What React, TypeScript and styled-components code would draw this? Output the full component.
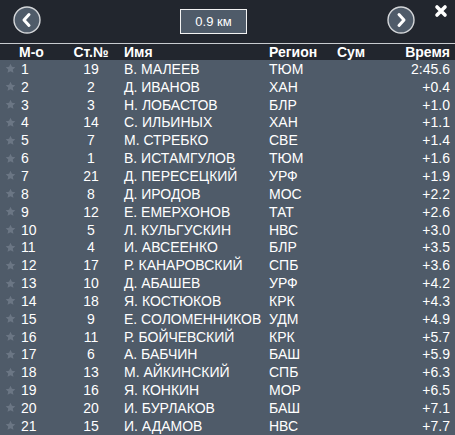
import React from 'react';
import styled, { createGlobalStyle } from 'styled-components';

const GlobalStyle = createGlobalStyle`
  html, body {
    margin: 0;
    padding: 0;
    background: #22262e;
  }
`;

interface Result {
  place: number;
  bib: number;
  name: string;
  region: string;
  time: string;
}

const results: Result[] = [
  { place: 1, bib: 19, name: 'В. МАЛЕЕВ', region: 'ТЮМ', time: '2:45.6' },
  { place: 2, bib: 2, name: 'Д. ИВАНОВ', region: 'ХАН', time: '+0.4' },
  { place: 3, bib: 3, name: 'Н. ЛОБАСТОВ', region: 'БЛР', time: '+1.0' },
  { place: 4, bib: 14, name: 'С. ИЛЬИНЫХ', region: 'ХАН', time: '+1.1' },
  { place: 5, bib: 7, name: 'М. СТРЕБКО', region: 'СВЕ', time: '+1.4' },
  { place: 6, bib: 1, name: 'В. ИСТАМГУЛОВ', region: 'ТЮМ', time: '+1.6' },
  { place: 7, bib: 21, name: 'Д. ПЕРЕСЕЦКИЙ', region: 'УРФ', time: '+1.9' },
  { place: 8, bib: 8, name: 'Д. ИРОДОВ', region: 'МОС', time: '+2.2' },
  { place: 9, bib: 12, name: 'Е. ЕМЕРХОНОВ', region: 'ТАТ', time: '+2.6' },
  { place: 10, bib: 5, name: 'Л. КУЛЬГУСКИН', region: 'НВС', time: '+3.0' },
  { place: 11, bib: 4, name: 'И. АВСЕЕНКО', region: 'БЛР', time: '+3.5' },
  { place: 12, bib: 17, name: 'Р. КАНАРОВСКИЙ', region: 'СПБ', time: '+3.6' },
  { place: 13, bib: 10, name: 'Д. АБАШЕВ', region: 'УРФ', time: '+4.2' },
  { place: 14, bib: 18, name: 'Я. КОСТЮКОВ', region: 'КРК', time: '+4.3' },
  { place: 15, bib: 9, name: 'Е. СОЛОМЕННИКОВ', region: 'УДМ', time: '+4.9' },
  { place: 16, bib: 11, name: 'Р. БОЙЧЕВСКИЙ', region: 'КРК', time: '+5.7' },
  { place: 17, bib: 6, name: 'А. БАБЧИН', region: 'БАШ', time: '+5.9' },
  { place: 18, bib: 13, name: 'М. АЙКИНСКИЙ', region: 'СПБ', time: '+6.3' },
  { place: 19, bib: 16, name: 'Я. КОНКИН', region: 'МОР', time: '+6.5' },
  { place: 20, bib: 20, name: 'И. БУРЛАКОВ', region: 'БАШ', time: '+7.1' },
  { place: 21, bib: 15, name: 'И. АДАМОВ', region: 'НВС', time: '+7.7' }
];

const Screen = styled.div`
  width: 455px;
  height: 435px;
  overflow: hidden;
  background: #22262e;
  font-family: 'Liberation Sans', Arial, sans-serif;
  color: #ffffff;
`;

const TopBar = styled.div`
  height: 43px;
  display: flex;
  align-items: flex-start;
  padding-left: 13px;
  box-sizing: border-box;
`;

const RoundButton = styled.button<{ $offset: number }>`
  width: 28px;
  height: 28px;
  margin-top: 6px;
  margin-left: ${({ $offset }) => $offset}px;
  padding: 0;
  border: none;
  background: transparent;
  display: flex;
  align-items: center;
  justify-content: center;
  cursor: pointer;
`;

const Distance = styled.div`
  margin-left: 139px;
  margin-top: 9px;
  width: 67px;
  height: 25px;
  box-sizing: border-box;
  border: 1px solid #f2f2f2;
  background: #4f5b69;
  font-size: 13px;
  line-height: 23px;
  text-align: center;
`;

const Close = styled.button`
  margin-left: 19px;
  margin-top: 4px;
  width: 14px;
  height: 14px;
  padding: 0;
  border: none;
  background: transparent;
  display: flex;
  cursor: pointer;
`;

const Table = styled.div`
  border-top: 1px solid #c9ccd0;
`;

const Row = styled.div<{ $head?: boolean }>`
  display: grid;
  grid-template-columns: 72px 38px 159px 68px 50px 1fr;
  align-items: center;
  height: ${({ $head }) => ($head ? '16px' : '17.85px')};
  background: ${({ $head }) => ($head ? '#22262e' : '#4f5b69')};
  font-size: 14px;
  font-weight: ${({ $head }) => ($head ? 700 : 400)};
  white-space: nowrap;
`;

const PlaceCell = styled.div<{ $head?: boolean }>`
  display: flex;
  align-items: center;
  padding-left: ${({ $head }) => ($head ? '19px' : '5px')};
`;

const BibCell = styled.div`
  text-align: center;
`;

const NameCell = styled.div`
  padding-left: 14px;
  overflow: visible;
`;

const TimeCell = styled.div`
  text-align: right;
  padding-right: 5px;
`;

const StarIcon = styled.svg`
  width: 11px;
  height: 11px;
  margin-right: 5px;
  flex-shrink: 0;
`;

function Chevron ({ dir }: { dir: 'left' | 'right' }) {
  const d = dir === 'left' ? 'M16 8.5 L11 14 L16 19.5' : 'M12 8.5 L17 14 L12 19.5';

  return (
    <svg height='28' viewBox='0 0 28 28' width='28'>
      <circle cx='14' cy='14' fill='#4f5b69' r='13' stroke='#d4d6d9' strokeWidth='1.4' />
      <path d={d} fill='none' stroke='#ffffff' strokeLinecap='round' strokeLinejoin='round' strokeWidth='3' />
    </svg>
  );
}

function Star () {
  return (
    <StarIcon viewBox='0 0 24 24'>
      <path
        d='M12 1.5 L15.1 8.3 L22.5 9.1 L17 14.1 L18.5 21.5 L12 17.8 L5.5 21.5 L7 14.1 L1.5 9.1 L8.9 8.3 Z'
        fill='#6b7684'
      />
    </StarIcon>
  );
}

function App (): React.ReactElement {
  return (
    <>
      <GlobalStyle />
      <Screen>
        <TopBar>
          <RoundButton $offset={0}>
            <Chevron dir='left' />
          </RoundButton>
          <Distance>0.9 км</Distance>
          <RoundButton $offset={140}>
            <Chevron dir='right' />
          </RoundButton>
          <Close>
            <svg height='14' viewBox='0 0 14 14' width='14'>
              <path d='M3 3 L11 11 M11 3 L3 11' stroke='#ffffff' strokeLinecap='round' strokeWidth='3.6' />
            </svg>
          </Close>
        </TopBar>
        <Table>
          <Row $head>
            <PlaceCell $head>М-о</PlaceCell>
            <BibCell>Ст.№</BibCell>
            <NameCell>Имя</NameCell>
            <div>Регион</div>
            <div>Сум</div>
            <TimeCell>Время</TimeCell>
          </Row>
          {results.map((r) => (
            <Row key={r.place}>
              <PlaceCell>
                <Star />
                {r.place}
              </PlaceCell>
              <BibCell>{r.bib}</BibCell>
              <NameCell>{r.name}</NameCell>
              <div>{r.region}</div>
              <div />
              <TimeCell>{r.time}</TimeCell>
            </Row>
          ))}
        </Table>
      </Screen>
    </>
  );
}

export default App;
